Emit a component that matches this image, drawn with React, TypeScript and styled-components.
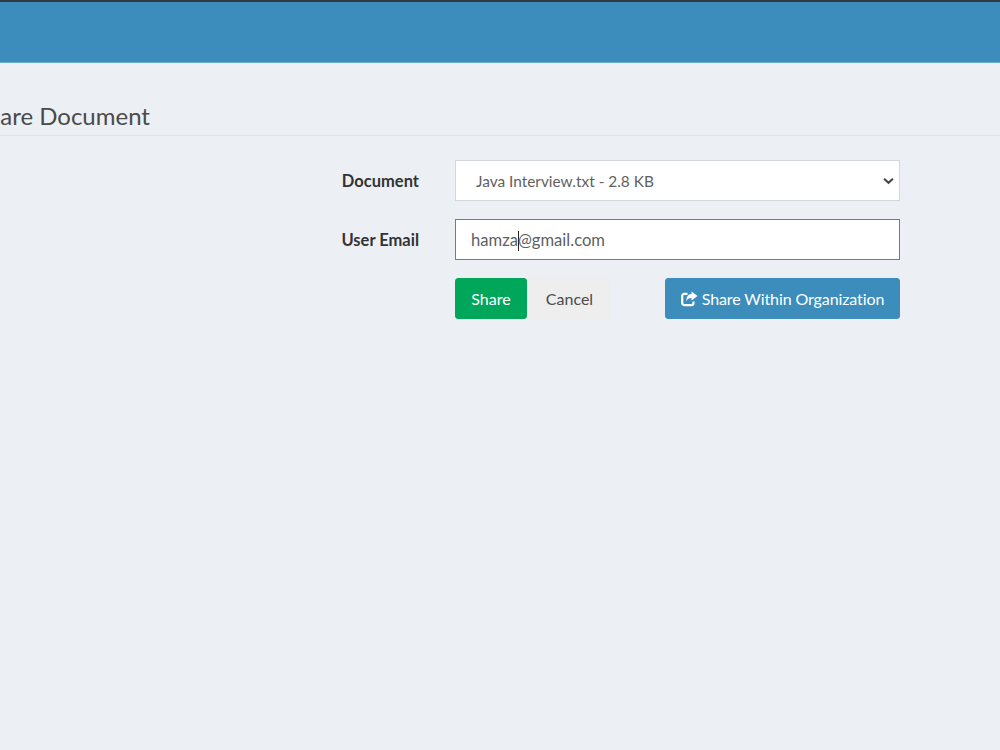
import React, { FC } from 'react';
import styled, { createGlobalStyle } from 'styled-components';

const GlobalStyle = createGlobalStyle`
  html, body {
    margin: 0;
    padding: 0;
    height: 100%;
    overflow: hidden;
    background: #ecf0f5;
    font-family: Lato, "Noto Sans", "Liberation Sans", sans-serif;
  }
`;

const App: FC = () => {
  return (
    <Page>
      <GlobalStyle />
      <TopBar />
      <Header>
        <Title>Share Document</Title>
      </Header>
      <Form>
        <Row>
          <Label>Document</Label>
          <SelectWrap>
            <Select defaultValue="java">
              <option value="java">Java Interview.txt - 2.8 KB</option>
            </Select>
            <Chevron viewBox="0 0 12 8">
              <path d="M1.2 1.5 L6 6 L10.8 1.5" fill="none" stroke="#444" strokeWidth="2.2" />
            </Chevron>
          </SelectWrap>
        </Row>
        <Row>
          <Label>User Email</Label>
          <InputBox>
            hamza<Caret />@gmail.com
          </InputBox>
        </Row>
        <ButtonRow>
          <ShareButton>Share</ShareButton>
          <CancelButton>Cancel</CancelButton>
          <OrgButton>
            <svg width="17" height="16" viewBox="0 0 17 16">
              <path
                d="M12.5 10.5 V12 a2.2 2.2 0 0 1 -2.2 2.2 H3.4 A2.2 2.2 0 0 1 1.2 12 V5 A2.2 2.2 0 0 1 3.4 2.8 H6.5"
                fill="none"
                stroke="#fff"
                strokeWidth="2.2"
              />
              <path d="M10.5 0.5 L16.5 5 L10.5 9.5 V7 C7.5 7 6 8 5.5 10.5 C5 6 7 3.2 10.5 3 Z" fill="#fff" />
            </svg>
            Share Within Organization
          </OrgButton>
        </ButtonRow>
      </Form>
    </Page>
  );
};

export default App;

const Page = styled.div`
  width: 1000px;
  height: 750px;
  overflow: hidden;
  background: #ecf0f5;
`;

const TopBar = styled.div`
  height: 60px;
  background: #3c8dbc;
  border-top: 2px solid #2f3b45;
  border-bottom: 1px solid #6aa9d0;
`;

const Header = styled.div`
  height: 72px;
  border-bottom: 1px solid #e1e5ea;
  display: flex;
  align-items: flex-end;
`;

const Title = styled.h1`
  margin: 0 0 2px -26px;
  font-size: 24px;
  line-height: 34px;
  font-weight: 400;
  color: #4a4a4a;
  white-space: nowrap;
`;

const Form = styled.div`
  width: 445px;
  margin: 24px 0 0 455px;
  display: flex;
  flex-direction: column;
  gap: 18px;
`;

const Row = styled.div`
  position: relative;
  height: 41px;
`;

const Label = styled.label`
  position: absolute;
  right: calc(100% + 36px);
  top: 11px;
  font-size: 16.5px;
  line-height: 20px;
  font-weight: 700;
  color: #333;
  white-space: nowrap;
`;

const SelectWrap = styled.div`
  position: relative;
  height: 41px;
`;

const Select = styled.select`
  display: block;
  width: 100%;
  height: 41px;
  padding: 0 12px 0 20px;
  box-sizing: border-box;
  border: 1px solid #d2d6de;
  border-radius: 0;
  background: #fff;
  color: #5f5f5f;
  font-family: inherit;
  font-size: 15.4px;
  outline: none;
  appearance: none;
`;

const Chevron = styled.svg`
  position: absolute;
  right: 6px;
  top: 17px;
  width: 11px;
  height: 8px;
  pointer-events: none;
`;

const InputBox = styled.div`
  height: 41px;
  padding-left: 15px;
  box-sizing: border-box;
  border: 1px solid #3c8dbc;
  background: #fff;
  color: #5f5f5f;
  font-size: 16.6px;
  line-height: 40px;
  white-space: nowrap;
`;

const Caret = styled.span`
  display: inline-block;
  width: 1px;
  height: 20px;
  margin-right: -1px;
  background: #222;
  vertical-align: -5px;
`;

const ButtonRow = styled.div`
  display: flex;
  align-items: stretch;
  height: 41px;
`;

const BaseButton = styled.button`
  display: inline-flex;
  align-items: center;
  justify-content: center;
  box-sizing: border-box;
  padding: 0;
  font-family: inherit;
  font-size: 16px;
  border-radius: 3px;
  border: 1px solid transparent;
`;

const ShareButton = styled(BaseButton)`
  width: 72px;
  background: #00a65a;
  border-color: #00a65a;
  color: #fff;
`;

const CancelButton = styled(BaseButton)`
  width: 83px;
  padding-left: 2px;
  background: #eeeeee;
  border-color: #eeeeee;
  color: #4a4a4a;
  border-radius: 0;
`;

const OrgButton = styled(BaseButton)`
  width: 235px;
  margin-left: auto;
  gap: 4px;
  background: #3c8dbc;
  border-color: #3c8dbc;
  color: #fff;
  letter-spacing: -0.1px;
`;
